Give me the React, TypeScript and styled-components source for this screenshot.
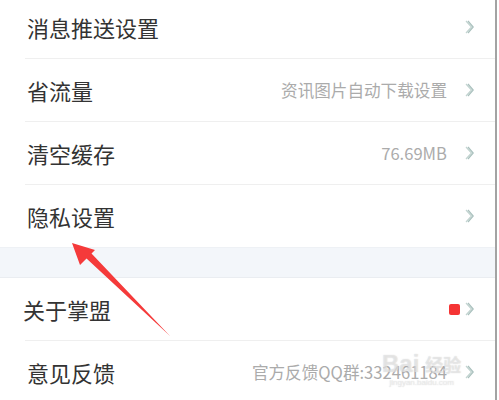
import React from "react";
import styled, { createGlobalStyle } from "styled-components";

const GlobalStyle = createGlobalStyle`
  html, body { margin: 0; padding: 0; background: #ffffff; }
  body { font-family: "Noto Sans CJK SC", "Noto Sans", sans-serif; overflow: hidden; }
`;

const Frame = styled.div`
  position: relative;
  width: 499px;
  height: 400px;
  overflow: hidden;
  background: #ffffff;
`;

const Screen = styled.div`
  width: 497px;
  height: 400px;
  border-right: 2px solid #a3a3a3;
  box-sizing: border-box;
  overflow: hidden;
`;

const List = styled.div`
  display: flex;
  flex-direction: column;
  margin-top: -4px;
`;

const Row = styled.div<{ $indent: number }>`
  height: 62px;
  display: flex;
  align-items: center;
  padding-left: ${(p) => p.$indent}px;
  padding-right: 21px;
  box-sizing: border-box;
`;

const Label = styled.span`
  font-size: 22px;
  color: #333333;
  flex: 1;
  line-height: 1;
`;

const Value = styled.span`
  font-size: 16.6px;
  color: #ababab;
  margin-right: 18px;
  line-height: 1;
`;

const Dot = styled.span`
  width: 11px;
  height: 11px;
  border-radius: 2px;
  background: #f53434;
  margin-right: 5px;
`;

const Divider = styled.div`
  height: 1px;
  margin-left: 25px;
  background: #efefef;
`;

const Gap = styled.div`
  height: 29px;
  background: #f3f6fa;
  border-top: 1px solid #eef1f5;
  border-bottom: 1px solid #eaedf1;
`;

const Overlay = styled.svg`
  position: absolute;
  left: 0;
  top: 0;
  pointer-events: none;
`;

const Watermark = styled.div`
  position: absolute;
  left: 382px;
  top: 352px;
  display: flex;
  flex-direction: column;
  align-items: center;
  color: rgba(255, 255, 255, 0.45);
  text-shadow: 0 0 1px rgba(170, 170, 170, 0.6);
  pointer-events: none;
`;

const MarkTop = styled.span`
  font-size: 24px;
  font-weight: bold;
  line-height: 1;
  font-family: "Liberation Sans", "Noto Sans CJK SC", sans-serif;
`;

const MarkSmall = styled.span`
  font-size: 18px;
  margin-left: 6px;
`;

const MarkBottom = styled.span`
  font-size: 8px;
  line-height: 1;
  margin-top: 3px;
  font-family: "Liberation Sans", sans-serif;
`;

const Chevron = () => (
  <svg width="9" height="14" viewBox="0 0 9 14">
    <polyline points="1,1 6.5,7 1,13" fill="none" stroke="#c3d4d1" strokeWidth="1.2" />
    <polyline points="3,1 8.2,7 3,13" fill="none" stroke="#a9c0bd" strokeWidth="1.2" />
  </svg>
);

type Item = { label: string; value?: string; dot?: boolean; indent?: number };

const groupA: Item[] = [
  { label: "消息推送设置" },
  { label: "省流量", value: "资讯图片自动下载设置" },
  { label: "清空缓存", value: "76.69MB" },
  { label: "隐私设置" },
];

const groupB: Item[] = [
  { label: "关于掌盟", dot: true, indent: 23 },
  { label: "意见反馈", value: "官方反馈QQ群:332461184" },
];

const renderGroup = (items: Item[]) =>
  items.map((it, i) => (
    <React.Fragment key={it.label}>
      <Row $indent={it.indent ?? 27}>
        <Label>{it.label}</Label>
        {it.value && <Value>{it.value}</Value>}
        {it.dot && <Dot />}
        <Chevron />
      </Row>
      {i < items.length - 1 && <Divider />}
    </React.Fragment>
  ));

export default function App() {
  return (
    <Frame>
      <GlobalStyle />
      <Screen>
        <List>
          {renderGroup(groupA)}
          <Gap />
          {renderGroup(groupB)}
        </List>
      </Screen>
      <Watermark>
        <MarkTop>
          Bai<MarkSmall>经验</MarkSmall>
        </MarkTop>
        <MarkBottom>jingyan.baidu.com</MarkBottom>
      </Watermark>
      <Overlay width="499" height="400" viewBox="0 0 499 400">
        <polygon
          points="72,243 95,250 91.5,253.5 170,336 86.5,258.5 80,265"
          fill="#f53a3a"
        />
      </Overlay>
    </Frame>
  );
}
